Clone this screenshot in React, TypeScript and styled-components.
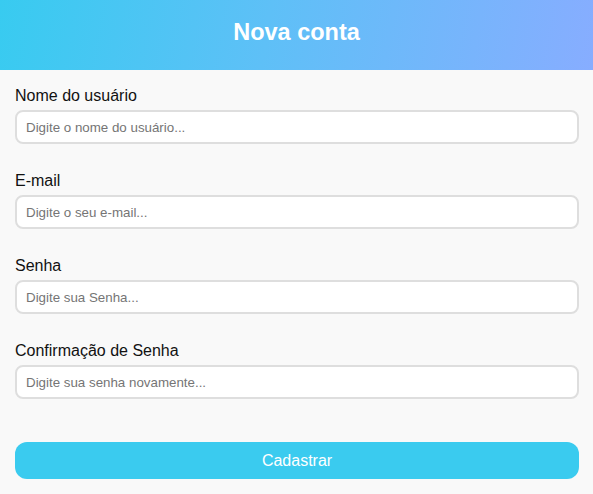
import React, { useState } from "react"
import styled, { createGlobalStyle } from "styled-components"

const GlobalStyle = createGlobalStyle`
  html, body {
    margin: 0;
    padding: 0;
    background: #f9f9f9;
    font-family: "Liberation Sans", Arial, sans-serif;
  }
`

interface Field {
  name: string
  label: string
  placeholder: string
  type: string
}

const fields: Field[] = [
  { name: "username", label: "Nome do usuário", placeholder: "Digite o nome do usuário...", type: "text" },
  { name: "email", label: "E-mail", placeholder: "Digite o seu e-mail...", type: "email" },
  { name: "password", label: "Senha", placeholder: "Digite sua Senha...", type: "password" },
  { name: "confirm", label: "Confirmação de Senha", placeholder: "Digite sua senha novamente...", type: "password" },
]

export default function App() {
  const [values, setValues] = useState<Record<string, string>>({})

  return (
    <>
      <GlobalStyle />
      <S.Page>
        <S.Header>
          <S.Title>Nova conta</S.Title>
        </S.Header>
        <S.Form onSubmit={(e) => e.preventDefault()}>
          {fields.map((field) => (
            <S.Group key={field.name}>
              <S.Label htmlFor={field.name}>{field.label}</S.Label>
              <S.Input
                id={field.name}
                type={field.type}
                placeholder={field.placeholder}
                value={values[field.name] || ""}
                onChange={(e) => setValues({ ...values, [field.name]: e.target.value })}
              />
            </S.Group>
          ))}
          <S.Button type="submit">Cadastrar</S.Button>
        </S.Form>
      </S.Page>
    </>
  )
}

const S = {
  Page: styled.div`
    width: 593px;
    min-height: 494px;
    background: #f9f9f9;
  `,
  Header: styled.header`
    height: 70px;
    display: flex;
    align-items: center;
    justify-content: center;
    background: linear-gradient(100deg, #38cbf0 0%, #5ec0f7 45%, #87adff 100%);
  `,
  Title: styled.h1`
    margin: 0 0 6px;
    color: #fff;
    font-size: 23.5px;
    font-weight: 700;
  `,
  Form: styled.form`
    display: flex;
    flex-direction: column;
    padding: 17px 14px 0 15px;
  `,
  Group: styled.div`
    display: flex;
    flex-direction: column;
    gap: 5px;
    margin-bottom: 28px;
  `,
  Label: styled.label`
    color: #111;
    font-size: 16px;
    line-height: 18px;
  `,
  Input: styled.input`
    box-sizing: border-box;
    height: 34px;
    width: 100%;
    padding: 0 9px;
    border: 2px solid #dedede;
    border-radius: 8px;
    background: #fff;
    font-family: "Liberation Sans", Arial, sans-serif;
    font-size: 13.33px;
    color: #333;
    outline: none;

    &::placeholder {
      color: #757575;
    }
  `,
  Button: styled.button`
    margin-top: 15px;
    height: 37px;
    width: 100%;
    border: none;
    border-radius: 12px;
    background: #3acbef;
    color: #fff;
    font-family: "Liberation Sans", Arial, sans-serif;
    font-size: 16px;
    cursor: pointer;
  `,
}
